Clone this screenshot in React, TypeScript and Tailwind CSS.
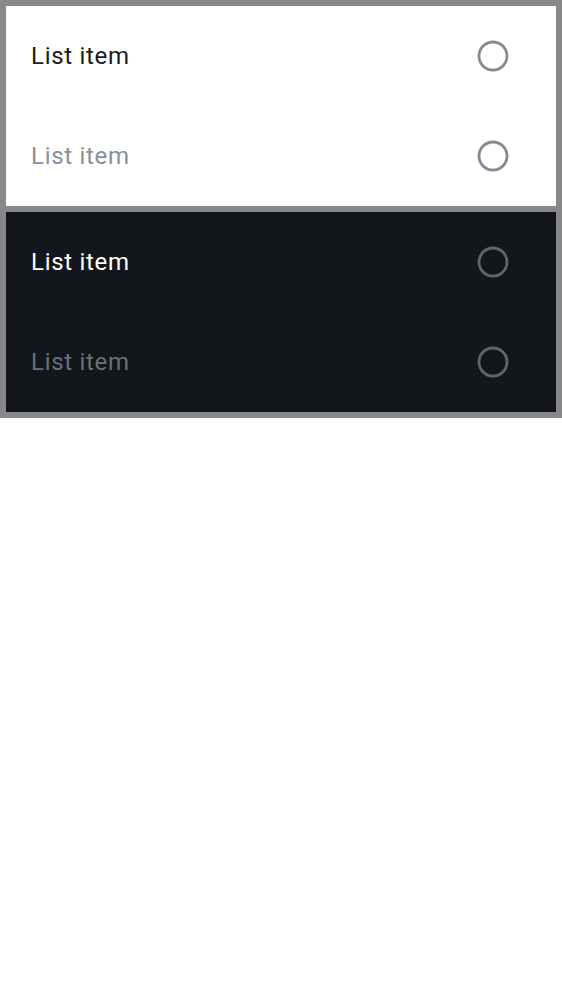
const items = [
  { label: "List item", disabled: false },
  { label: "List item", disabled: true },
];

const Radio = ({ dark }: { dark: boolean }) => (
  <svg width="34" height="34" viewBox="0 0 34 34" className="shrink-0">
    <circle cx="17" cy="17" r="14" fill="none" stroke={dark ? "#5f6570" : "#858b94"} strokeWidth="2.8" />
  </svg>
);

const Panel = ({ dark }: { dark: boolean }) => (
  <div className={`flex flex-col ${dark ? "bg-[#13161b]" : "bg-white"}`}>
    {items.map((item, i) => (
      <div key={i} className="flex items-center justify-between h-[100px] pl-[25px] pr-[46px]">
        <span
          className={`text-[24px] tracking-[0.7px] ${
            dark
              ? item.disabled
                ? "text-[#6b7079]"
                : "text-white"
              : item.disabled
              ? "text-[#8a8f98]"
              : "text-[#1b1c20]"
          }`}
        >
          {item.label}
        </span>
        <Radio dark={dark} />
      </div>
    ))}
  </div>
);

export default function App() {
  return (
    <div className="w-[562px] bg-white" style={{ fontFamily: "Roboto, sans-serif" }}>
      <div className="flex flex-col gap-[6px] p-[6px] bg-[#888888]">
        <Panel dark={false} />
        <Panel dark={true} />
      </div>
    </div>
  );
}
